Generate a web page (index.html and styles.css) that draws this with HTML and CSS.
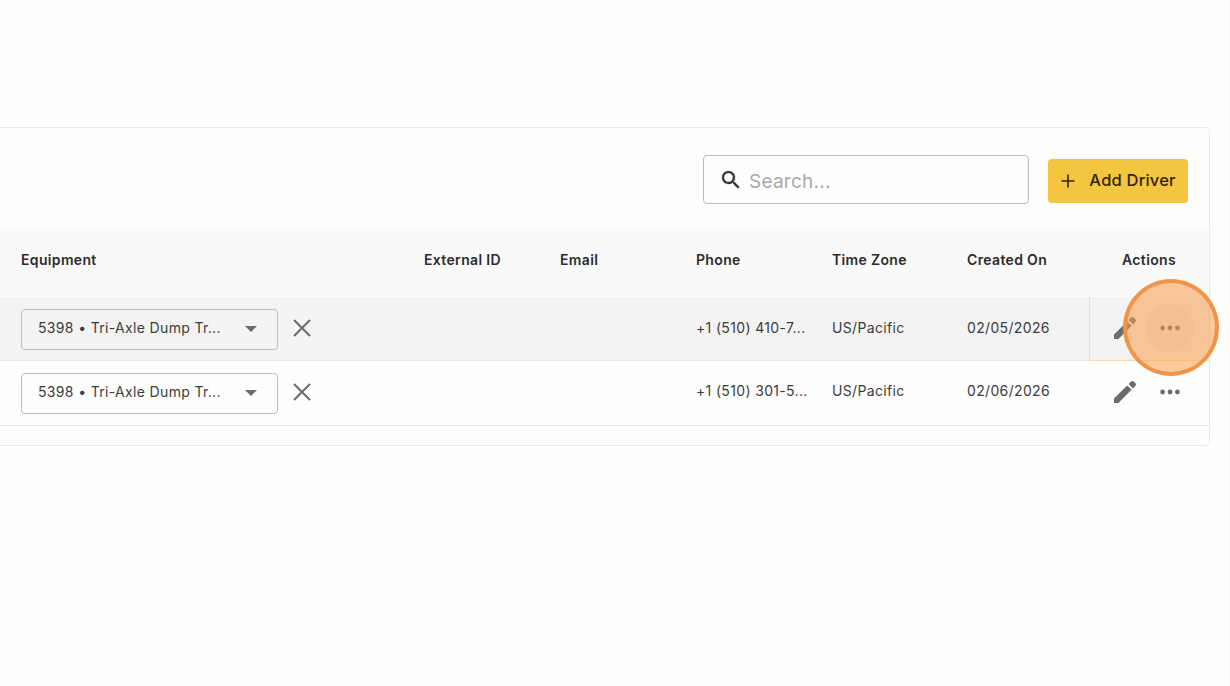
FILE: index.html
```html
<!DOCTYPE html>
<html lang="en">

<head>
  <meta charset="utf-8">

  <title>Drivers</title>

  <link rel="stylesheet" href="styles.css">
</head>

<body>
  <main class="card">
    <div class="toolbar">
      <label class="search">
        <svg class="search-icon" viewBox="0 0 24 24"><path d="M15.5 14h-.79l-.28-.27C15.41 12.59 16 11.11 16 9.5 16 5.91 13.09 3 9.5 3S3 5.91 3 9.5 5.91 16 9.5 16c1.61 0 3.09-.59 4.23-1.57l.27.28v.79l5 4.99L20.49 19l-4.99-5zm-6 0C7.01 14 5 11.99 5 9.5S7.01 5 9.5 5 14 7.01 14 9.5 11.99 14 9.5 14z"/></svg>
        <input type="text" placeholder="Search...">
      </label>
      <button class="add-driver">
        <svg class="plus-icon" viewBox="0 0 14 14"><path d="M7 .5v13M.5 7h13"/></svg>
        <span>Add Driver</span>
      </button>
    </div>

    <div class="row head">
      <div>Equipment</div>
      <div>External ID</div>
      <div>Email</div>
      <div>Phone</div>
      <div>Time Zone</div>
      <div>Created On</div>
      <div class="actions-head">Actions</div>
    </div>

    <div class="row hovered">
      <div class="equipment">
        <div class="select">
          <span>5398 • Tri-Axle Dump Tr...</span>
          <svg class="arrow" viewBox="0 0 12 6"><path d="M0 0h12L6 6z"/></svg>
        </div>
        <svg class="clear" viewBox="0 0 18 18"><path d="M1 1l16 16M17 1L1 17"/></svg>
      </div>
      <div></div>
      <div></div>
      <div class="text">+1 (510) 410-7...</div>
      <div class="text">US/Pacific</div>
      <div class="text">02/05/2026</div>
      <div class="actions focused">
        <svg class="edit" viewBox="0 0 24 24"><path d="M1 23v-4.400L14.200 5.400l4.400 4.400L5.400 23zM15.600 4l2.200-2.200c1-1 2.100-1 3-.2l1.600 1.600c.8.9.8 2-.2 3L20 8.400z"/></svg>
        <span class="menu">
          <svg class="dots" viewBox="0 0 20 6"><circle cx="2.600" cy="3" r="2.400"/><circle cx="10" cy="3" r="2.400"/><circle cx="17.400" cy="3" r="2.400"/></svg>
          <span class="click-marker"></span>
        </span>
      </div>
    </div>

    <div class="row">
      <div class="equipment">
        <div class="select">
          <span>5398 • Tri-Axle Dump Tr...</span>
          <svg class="arrow" viewBox="0 0 12 6"><path d="M0 0h12L6 6z"/></svg>
        </div>
        <svg class="clear" viewBox="0 0 18 18"><path d="M1 1l16 16M17 1L1 17"/></svg>
      </div>
      <div></div>
      <div></div>
      <div class="text">+1 (510) 301-5...</div>
      <div class="text">US/Pacific</div>
      <div class="text">02/06/2026</div>
      <div class="actions">
        <svg class="edit" viewBox="0 0 24 24"><path d="M1 23v-4.400L14.200 5.400l4.400 4.400L5.400 23zM15.600 4l2.200-2.200c1-1 2.100-1 3-.2l1.600 1.600c.8.9.8 2-.2 3L20 8.400z"/></svg>
        <span class="menu">
          <svg class="dots" viewBox="0 0 20 6"><circle cx="2.600" cy="3" r="2.400"/><circle cx="10" cy="3" r="2.400"/><circle cx="17.400" cy="3" r="2.400"/></svg>
        </span>
      </div>
    </div>
  </main>
</body>

</html>
```
FILE: styles.css
```css
* {
  box-sizing: border-box;
}

body {
  margin: 0;
  padding-top: 127px;
  height: 686px;
  overflow: hidden;
  background-color: #fefefe;
  border-right: 1px solid #f7f7f7;
  font-family: Inter, sans-serif;
  font-size: 14px;
  letter-spacing: 0.34px;
  color: #3c3c3c;
}

.card {
  width: 1210px;
  height: 319px;
  border: 1px solid #e9e9e9;
  border-left: none;
  border-radius: 0 5px 5px 0;
}

.toolbar {
  display: flex;
  justify-content: flex-end;
  align-items: center;
  gap: 19px;
  height: 101px;
  padding: 3px 21px 0 0;
}

.search {
  display: flex;
  align-items: center;
  gap: 6px;
  width: 326px;
  height: 49px;
  margin-top: -1px;
  padding-left: 15px;
  border: 1px solid #bdbdbd;
  border-radius: 4px;
}

.search-icon {
  width: 24px;
  height: 24px;
  fill: #333;
  stroke: #333;
  stroke-width: 0.3px;
}

.search input {
  width: 250px;
  padding: 3px 0 0;
  border: none;
  outline: none;
  background: none;
  font: inherit;
  font-size: 19px;
  letter-spacing: 0.25px;
}

.search input::placeholder {
  color: #a9a9a9;
}

.add-driver {
  display: flex;
  align-items: center;
  justify-content: center;
  gap: 14px;
  width: 140px;
  height: 44px;
  margin-top: 2px;
  padding: 0 0 2px 1px;
  border: none;
  border-radius: 4px;
  background-color: #f4c53e;
  color: #302408;
  font-family: inherit;
  font-size: 16.5px;
  font-weight: 450;
  letter-spacing: 0.2px;
  white-space: nowrap;
}

.plus-icon {
  width: 14px;
  height: 14px;
  margin-top: 1px;
  fill: none;
  stroke: #302408;
  stroke-width: 1.6px;
}

.row {
  display: grid;
  grid-template-columns: 403px 136px 136px 136px 135px 122px 120px;
  align-items: center;
  height: 65px;
  padding-left: 21px;
  border-bottom: 1px solid #e8e8e8;
}

.head {
  height: 68px;
  padding-bottom: 7px;
  border-bottom: 1px solid #fcfcfc;
  background-color: #f9f9f9;
  color: #2c2c2c;
  font-weight: 600;
}

.actions-head {
  text-align: center;
}

.hovered {
  height: 64px;
  background-color: #f3f3f3;
}

.text {
  padding-bottom: 6px;
}

.hovered .text {
  padding-bottom: 3px;
}

.equipment {
  display: flex;
  align-items: center;
  gap: 15px;
}

.select {
  display: flex;
  align-items: center;
  justify-content: space-between;
  width: 257px;
  height: 41px;
  padding: 0 20px 3px 16px;
  border: 1px solid #bdbdbd;
  border-radius: 4px;
}

.arrow {
  width: 12px;
  height: 6px;
  margin-top: 3px;
  fill: #6b6b6b;
}

.clear {
  width: 18px;
  height: 18px;
  margin-top: -3px;
  fill: none;
  stroke: #6b6b6b;
  stroke-width: 2px;
}

.actions {
  display: flex;
  align-items: center;
  height: 100%;
  padding: 0 0 3px 25px;
}

.focused {
  height: 64px;
  border-left: 1px solid #f5dfa6;
  border-bottom: 1px solid #f5dfa6;
  padding: 0 0 2px 24px;
}

.edit {
  width: 24px;
  height: 24px;
  margin-left: -1px;
  fill: #6c6c6c;
}

.menu {
  position: relative;
  display: flex;
  align-items: center;
  justify-content: center;
  width: 48px;
  height: 48px;
  margin-left: 9px;
  border-radius: 50%;
}

.focused .menu {
  background-color: #ebebeb;
}

.dots {
  width: 20px;
  height: 6px;
  fill: #6c6c6c;
}

/* click highlight over the open menu button */
.click-marker {
  position: absolute;
  top: -25px;
  left: -23px;
  width: 96px;
  height: 97px;
  border: 4px solid #f0944a;
  border-radius: 50%;
  background-color: rgba(250, 156, 76, 0.55);
}
```
